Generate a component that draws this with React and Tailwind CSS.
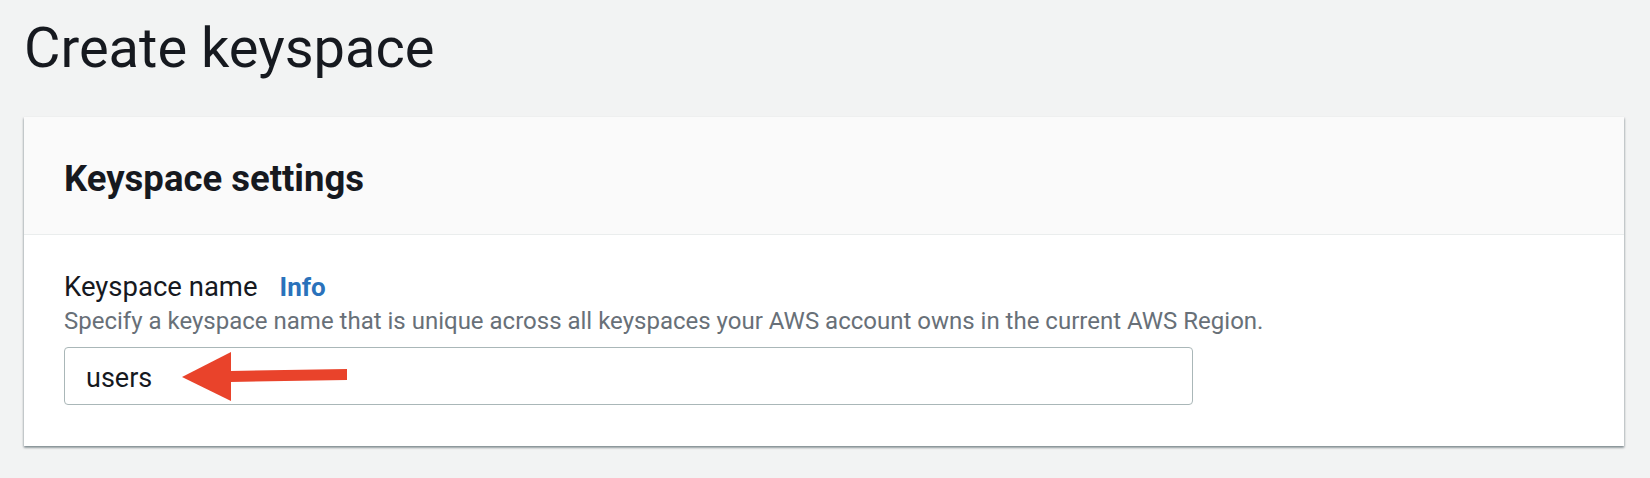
import { useMemo } from 'react';

const font = { fontFamily: 'Roboto, "Liberation Sans", sans-serif' };

function Arrow() {
  // red annotation arrow pointing at the input value
  return (
    <svg
      className="pointer-events-none absolute left-0 top-0"
      width="300"
      height="60"
      viewBox="0 0 300 60"
    >
      <polygon points="118,30 167,5 167,54" fill="#e9432b" />
      <polygon points="166,24 283,22 283,33 166,35" fill="#e9432b" />
    </svg>
  );
}

export default function App() {
  const copy = useMemo(
    () => ({
      title: 'Create keyspace',
      section: 'Keyspace settings',
      label: 'Keyspace name',
      hint: 'Specify a keyspace name that is unique across all keyspaces your AWS account owns in the current AWS Region.'
    }),
    []
  );

  return (
    <div className="min-h-screen bg-[#f2f3f3] px-6 pt-[20px]" style={font}>
      <h1 className="text-[56px] font-normal leading-none text-[#16191f]">{copy.title}</h1>

      <section className="mt-[41px] w-[1600px] bg-white shadow-[0_2px_2px_0_rgba(0,28,36,0.3),1px_1px_2px_0_rgba(0,28,36,0.15),-1px_1px_2px_0_rgba(0,28,36,0.15)]">
        <header className="border-b border-[#eaeded] bg-[#fafafa] px-[40px] pb-[37px] pt-[44px]">
          <h2 className="text-[36.5px] font-bold leading-[36px] text-[#16191f]">{copy.section}</h2>
        </header>

        <div className="px-[40px] pb-[41px] pt-[35px]">
          <div className="flex items-baseline gap-[22px] leading-[34px]">
            <span className="text-[27.5px] text-[#16191f]">{copy.label}</span>
            <a className="text-[26px] font-bold text-[#2a72bb]">Info</a>
          </div>
          <p className="text-[24px] leading-[34px] text-[#687078]">{copy.hint}</p>

          <div className="relative mt-[9px] w-[1129px]">
            <div className="flex h-[58px] items-center rounded-[4px] border-[1.5px] border-[#aab7b8] bg-white px-[21px] pt-[4px] text-[27px] text-[#16191f]">
              users
            </div>
            <Arrow />
          </div>
        </div>
      </section>
    </div>
  );
}
